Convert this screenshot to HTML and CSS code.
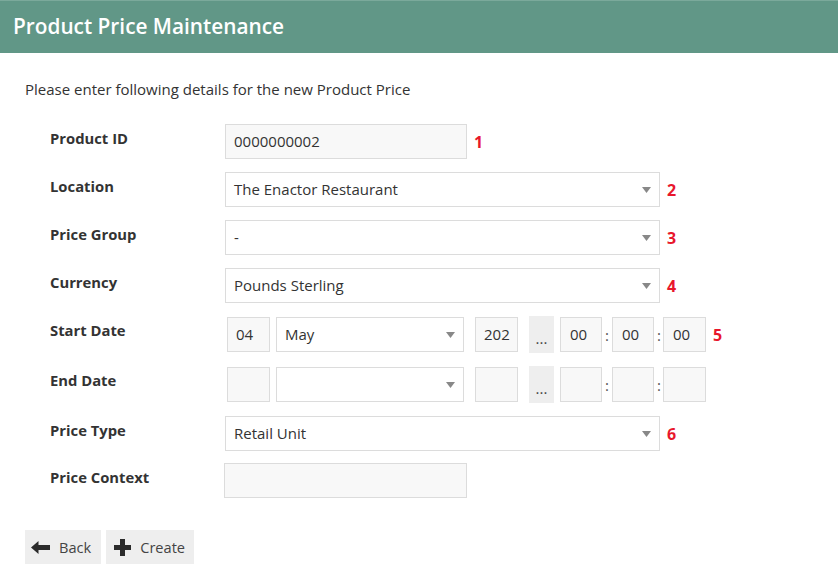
FILE: index.html
```html
<!DOCTYPE html>
<html>
<head>
<meta charset="utf-8">
<link rel="stylesheet" href="styles.css">
</head>
<body>
<div class="header">Product Price Maintenance</div>
<div class="content">
  <p class="intro">Please enter following details for the new Product Price</p>
  <div class="form">
    <div class="row">
      <div class="lbl">Product ID</div>
      <div class="txt w-id">0000000002</div>
      <span class="num">1</span>
    </div>
    <div class="row">
      <div class="lbl">Location</div>
      <div class="sel w-sel"><span>The Enactor Restaurant</span><svg class="arr" width="9" height="6" viewBox="0 0 9 6"><path d="M0 0H9L4.5 6Z"/></svg></div>
      <span class="num">2</span>
    </div>
    <div class="row">
      <div class="lbl">Price Group</div>
      <div class="sel w-sel"><span>-</span><svg class="arr" width="9" height="6" viewBox="0 0 9 6"><path d="M0 0H9L4.5 6Z"/></svg></div>
      <span class="num">3</span>
    </div>
    <div class="row">
      <div class="lbl">Currency</div>
      <div class="sel w-sel"><span>Pounds Sterling</span><svg class="arr" width="9" height="6" viewBox="0 0 9 6"><path d="M0 0H9L4.5 6Z"/></svg></div>
      <span class="num">4</span>
    </div>
    <div class="row date-row">
      <div class="lbl">Start Date</div>
      <div class="date">
        <div class="txt w-day">04</div>
        <div class="sel w-month"><span>May</span><svg class="arr" width="9" height="6" viewBox="0 0 9 6"><path d="M0 0H9L4.5 6Z"/></svg></div>
        <div class="txt w-year">202</div>
        <div class="dots">...</div>
        <div class="txt w-time">00</div><span class="colon">:</span>
        <div class="txt w-time">00</div><span class="colon">:</span>
        <div class="txt w-sec">00</div>
      </div>
      <span class="num">5</span>
    </div>
    <div class="row date-row">
      <div class="lbl">End Date</div>
      <div class="date">
        <div class="txt w-day"></div>
        <div class="sel w-month"><span></span><svg class="arr" width="9" height="6" viewBox="0 0 9 6"><path d="M0 0H9L4.5 6Z"/></svg></div>
        <div class="txt w-year"></div>
        <div class="dots">...</div>
        <div class="txt w-time"></div><span class="colon">:</span>
        <div class="txt w-time"></div><span class="colon">:</span>
        <div class="txt w-sec"></div>
      </div>
    </div>
    <div class="row tight">
      <div class="lbl">Price Type</div>
      <div class="sel w-sel"><span>Retail Unit</span><svg class="arr" width="9" height="6" viewBox="0 0 9 6"><path d="M0 0H9L4.5 6Z"/></svg></div>
      <span class="num">6</span>
    </div>
    <div class="row last">
      <div class="lbl">Price Context</div>
      <div class="txt w-ctx"></div>
    </div>
  </div>
  <div class="buttons">
    <div class="btn back">
      <svg width="19" height="13" viewBox="0 0 19 13"><path d="M0 6.5L7.5 0V4H19V9H7.5V13Z"/></svg>
      <span>Back</span>
    </div>
    <div class="btn create">
      <svg width="17" height="17" viewBox="0 0 17 17"><path d="M6 0H11V6H17V11H11V17H6V11H0V6H6Z"/></svg>
      <span>Create</span>
    </div>
  </div>
</div>
</body>
</html>
```
FILE: styles.css
```css
* { box-sizing: border-box; }
body {
  margin: 0;
  font-family: "Open Sans", "Liberation Sans", sans-serif;
  font-size: 15px;
  color: #333;
  background: #fff;
}
.header {
  height: 53px;
  background: #619787;
  border-top: 1px solid #7ba99b;
  color: #fff;
  font-size: 20.8px;
  font-weight: 600;
  line-height: 51px;
  padding-left: 13px;
}
.content {
  padding: 26px 25px 0 25px;
}
.intro {
  margin: 0 0 25px 0;
  line-height: 20px;
}
.form {
  padding-left: 25px;
}
.row {
  display: flex;
  align-items: center;
  margin-bottom: 13px;
}
.row.tight { margin-bottom: 12px; }
.row.last { margin-bottom: 0; }
.lbl {
  width: 175px;
  flex: none;
  align-self: flex-start;
  padding-top: 4px;
  line-height: 20px;
  font-size: 14.8px;
  font-weight: 700;
  color: #333;
}
.txt, .sel {
  height: 35px;
  border: 1px solid #dcdcdc;
  padding-left: 8px;
  line-height: 33px;
  color: #333;
  flex: none;
  white-space: nowrap;
  overflow: hidden;
}
.txt { background: #f8f8f8; }
.sel {
  background: #fff;
  display: flex;
  align-items: center;
  justify-content: space-between;
  padding-right: 8px;
}
.arr { fill: #888; flex: none; }
.w-id { width: 242px; }
.w-ctx { width: 243px; margin-left: -1px; }
.w-sel { width: 435px; }
.num {
  margin-left: 7px;
  font-size: 16px;
  font-weight: 700;
  color: #e8172c;
  line-height: 20px;
}
.date {
  display: flex;
  align-items: center;
  margin-left: 2px;
}
.w-day { width: 43px; margin-right: 6px; }
.w-month { width: 188px; margin-right: 11px; }
.w-year { width: 43px; margin-right: 11px; }
.w-time { width: 42px; padding-left: 9px; }
.w-sec { width: 43px; padding-left: 9px; }
.date .txt.w-day, .date .txt.w-year { padding-left: 8px; }
.dots {
  width: 25px;
  height: 37px;
  background: #eee;
  margin-right: 6px;
  text-align: center;
  line-height: 20px;
  padding-top: 12px;
  color: #444;
  flex: none;
}
.colon {
  width: 10px;
  text-align: center;
  color: #555;
  line-height: 20px;
}
.date .colon + .txt.w-sec { margin-left: -1px; }
.date .num { margin-left: 8px; }
.buttons {
  display: flex;
  gap: 5px;
  margin-top: 32px;
}
.btn {
  height: 34px;
  background: #eee;
  display: flex;
  align-items: center;
  color: #444;
  font-size: 14.6px;
}
.btn svg { fill: #2b2b2b; flex: none; }
.back { padding: 0 10px 0 6px; gap: 9px; }
.create { padding: 0 9px 0 8px; gap: 9px; }
```
